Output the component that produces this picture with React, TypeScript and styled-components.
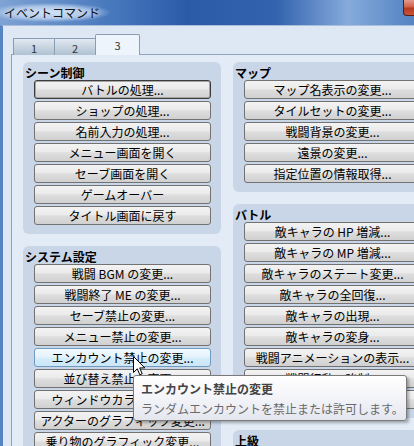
import React from 'react';
import styled, { createGlobalStyle, css } from 'styled-components';

const GlobalStyle = createGlobalStyle`
  html, body {
    margin: 0;
    padding: 0;
  }
  body {
    font-family: "Noto Sans CJK JP", "Noto Sans", sans-serif;
    background: #dfe9f5;
  }
`;

const Screen = styled.div`
  position: relative;
  width: 414px;
  height: 446px;
  overflow: hidden;
`;

const Window = styled.div`
  width: 446px;
  height: 100%;
  display: flex;
  flex-direction: column;
`;

const TitleBar = styled.div`
  height: 25px;
  flex: none;
  display: flex;
  align-items: flex-start;
  background: linear-gradient(
    90deg,
    #7fa3d4 0%,
    #4d7dc0 22%,
    #2b5ba7 42%,
    #3363ae 62%,
    #86abdb 78%,
    #5c8ac7 90%,
    #4676ba 100%
  );
`;

const TitleText = styled.div`
  margin-top: 3px;
  padding: 0 10px 0 4px;
  height: 19px;
  line-height: 19px;
  font-size: 12px;
  color: #111;
  background: radial-gradient(
    ellipse at 45% 50%,
    rgba(214, 230, 248, 0.95) 0%,
    rgba(190, 212, 240, 0.8) 45%,
    rgba(150, 184, 228, 0) 72%
  );
  text-shadow: 0 0 6px rgba(230, 240, 252, 0.9);
`;

const CloseButton = styled.div`
  margin-left: auto;
  width: 43px;
  height: 16px;
  box-sizing: border-box;
  border: 1px solid #5a1a12;
  border-top: none;
  border-radius: 0 0 4px 4px;
  background: linear-gradient(#e39a8c 0%, #d0614b 45%, #b33a22 55%, #c9553a 100%);
  display: flex;
  align-items: center;
  justify-content: center;
`;

const Body = styled.div`
  flex: 1;
  display: flex;
  flex-direction: column;
  border-top: 1px solid #a9bfdb;
  border-left: 3px solid #5684c3;
  background: #dde8f4;
  padding-top: 8px;
  min-height: 0;
`;

const TabRow = styled.div`
  display: flex;
  align-items: flex-end;
  padding-left: 10px;
  margin-bottom: -1px;
  position: relative;
  z-index: 1;
`;

const Tab = styled.div<{ $active?: boolean; $width: number }>`
  width: ${p => p.$width}px;
  box-sizing: border-box;
  border: 1px solid #8b9db3;
  border-bottom: none;
  font-size: 11px;
  color: #333;
  display: flex;
  justify-content: center;
  ${p =>
    p.$active
      ? css`
          height: 21px;
          padding-top: 2px;
          background: #eef4fb;
          border-radius: 2px 2px 0 0;
          margin-left: -1px;
        `
      : css`
          height: 17px;
          padding-top: 1px;
          background: linear-gradient(#e1e9f2 0%, #c8d5e1 50%, #b0c1d1 100%);
          & + & {
            margin-left: -1px;
          }
        `}
`;

const TabPanel = styled.div`
  flex: 1;
  margin-left: 8px;
  border-top: 1px solid #8ea3bd;
  border-left: 1px solid #8ea3bd;
  background: #e2ebf6;
  padding: 7px 0 0 11px;
  display: flex;
  gap: 12px;
  min-height: 0;
`;

const Column = styled.div`
  width: 198px;
  flex: none;
  display: flex;
  flex-direction: column;
  gap: 12px;
`;

const Group = styled.section`
  background: #c8d6e7;
  border-radius: 6px;
  padding: 3px 10px 9px 11px;
  display: flex;
  flex-direction: column;
  gap: 2px;
`;

const GroupTitle = styled.div`
  height: 15px;
  line-height: 15px;
  margin: 0 0 -2px -9px;
  font-size: 12px;
  font-weight: bold;
  color: #000;
  white-space: nowrap;
`;

type ButtonState = 'normal' | 'default' | 'hover';

const CommandButton = styled.div<{ $state?: ButtonState }>`
  height: 19px;
  flex: none;
  box-sizing: border-box;
  border: 1px solid #727272;
  border-radius: 3px;
  background: linear-gradient(#f3f3f3 0%, #ebebeb 45%, #dedede 52%, #d0d0d0 100%);
  display: flex;
  align-items: center;
  justify-content: center;
  font-size: 12px;
  line-height: 1;
  color: #000;
  white-space: nowrap;
  ${p =>
    p.$state === 'default' &&
    css`
      border-color: #3b3b3b;
      box-shadow: inset 0 0 0 1px #a5a5a5;
    `}
  ${p =>
    p.$state === 'hover' &&
    css`
      border-color: #6f9cc2;
      background: linear-gradient(#f2f9fe 0%, #e5f3fc 48%, #d6edfa 52%, #cbe6f7 100%);
    `}
`;

const Tooltip = styled.div`
  position: absolute;
  left: 133px;
  top: 375px;
  width: 274px;
  height: 46px;
  box-sizing: border-box;
  padding: 5px 7px;
  border: 1px solid #7a7a7a;
  border-radius: 3px;
  background: linear-gradient(#ffffff 0%, #f2f3f8 55%, #e4e6ef 100%);
  box-shadow: 2px 2px 3px rgba(0, 0, 0, 0.3);
  display: flex;
  flex-direction: column;
  gap: 4px;
  z-index: 5;
`;

const TipTitle = styled.div`
  font-size: 12px;
  line-height: 16px;
  font-weight: bold;
  color: #444;
  white-space: nowrap;
`;

const TipText = styled.div`
  font-size: 12px;
  line-height: 16px;
  color: #6a6a6a;
  white-space: nowrap;
`;

const Cursor = styled.svg`
  position: absolute;
  left: 133px;
  top: 356px;
  z-index: 6;
`;

type Cmd = { label: string; state?: ButtonState };

const sections: { title: string; items: Cmd[] }[][] = [
  [
    {
      title: 'シーン制御',
      items: [
        { label: 'バトルの処理...', state: 'default' },
        { label: 'ショップの処理...' },
        { label: '名前入力の処理...' },
        { label: 'メニュー画面を開く' },
        { label: 'セーブ画面を開く' },
        { label: 'ゲームオーバー' },
        { label: 'タイトル画面に戻す' },
      ],
    },
    {
      title: 'システム設定',
      items: [
        { label: '戦闘 BGM の変更...' },
        { label: '戦闘終了 ME の変更...' },
        { label: 'セーブ禁止の変更...' },
        { label: 'メニュー禁止の変更...' },
        { label: 'エンカウント禁止の変更...', state: 'hover' },
        { label: '並び替え禁止の変更...' },
        { label: 'ウィンドウカラーの変更...' },
        { label: 'アクターのグラフィック変更...' },
        { label: '乗り物のグラフィック変更...' },
      ],
    },
  ],
  [
    {
      title: 'マップ',
      items: [
        { label: 'マップ名表示の変更...' },
        { label: 'タイルセットの変更...' },
        { label: '戦闘背景の変更...' },
        { label: '遠景の変更...' },
        { label: '指定位置の情報取得...' },
      ],
    },
    {
      title: 'バトル',
      items: [
        { label: '敵キャラの HP 増減...' },
        { label: '敵キャラの MP 増減...' },
        { label: '敵キャラのステート変更...' },
        { label: '敵キャラの全回復...' },
        { label: '敵キャラの出現...' },
        { label: '敵キャラの変身...' },
        { label: '戦闘アニメーションの表示...' },
        { label: '戦闘行動の強制...' },
        { label: 'バトルの中断' },
      ],
    },
    {
      title: '上級',
      items: [{ label: 'スクリプト...' }],
    },
  ],
];

const App = () => {
  return (
    <Screen>
      <GlobalStyle />
      <Window>
        <TitleBar>
          <TitleText>イベントコマンド</TitleText>
          <CloseButton>
            <svg width="10" height="9" viewBox="0 0 10 9">
              <path d="M1 1 L9 8 M9 1 L1 8" stroke="#fff" strokeWidth="2" />
            </svg>
          </CloseButton>
        </TitleBar>
        <Body>
          <TabRow>
            <Tab $width={42}>1</Tab>
            <Tab $width={42}>2</Tab>
            <Tab $width={45} $active>
              3
            </Tab>
          </TabRow>
          <TabPanel>
            {sections.map((col, ci) => (
              <Column key={ci}>
                {col.map(group => (
                  <Group key={group.title}>
                    <GroupTitle>{group.title}</GroupTitle>
                    {group.items.map(item => (
                      <CommandButton key={item.label} $state={item.state}>
                        {item.label}
                      </CommandButton>
                    ))}
                  </Group>
                ))}
              </Column>
            ))}
          </TabPanel>
        </Body>
      </Window>
      <Cursor width="13" height="21" viewBox="0 0 13 21">
        <path
          d="M0.5 0.5 L0.5 16.5 L4.3 12.8 L6.8 18.8 L9.2 17.8 L6.7 11.9 L11.8 11.9 Z"
          fill="#fff"
          stroke="#000"
          strokeWidth="1"
          strokeLinejoin="miter"
        />
      </Cursor>
      <Tooltip>
        <TipTitle>エンカウント禁止の変更</TipTitle>
        <TipText>ランダムエンカウントを禁止または許可します。</TipText>
      </Tooltip>
    </Screen>
  );
};

export default App;
